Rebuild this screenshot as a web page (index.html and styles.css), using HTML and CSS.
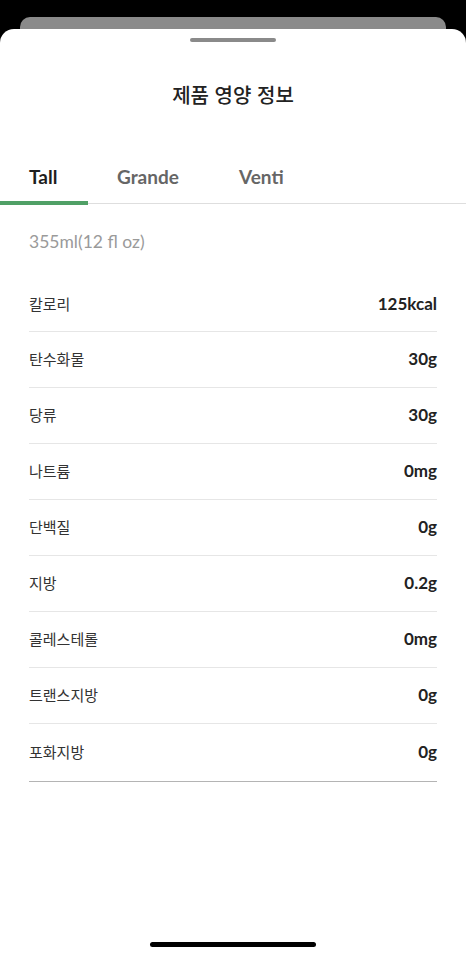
FILE: index.html
```html
<!DOCTYPE html>
<html lang="ko">
<head>
<meta charset="utf-8">
<link rel="stylesheet" href="styles.css">
</head>
<body>
<div class="screen">
  <div class="back-card"></div>
  <div class="sheet">
    <div class="handle"></div>
    <h1 class="title">제품 영양 정보</h1>
    <div class="tabs">
      <div class="tab active">Tall</div>
      <div class="tab">Grande</div>
      <div class="tab">Venti</div>
    </div>
    <div class="content">
      <div class="size">355ml(12 fl oz)</div>
      <ul class="rows">
        <li class="row"><span class="label">칼로리</span><span class="value">125kcal</span></li>
        <li class="row"><span class="label">탄수화물</span><span class="value">30g</span></li>
        <li class="row"><span class="label">당류</span><span class="value">30g</span></li>
        <li class="row"><span class="label">나트륨</span><span class="value">0mg</span></li>
        <li class="row"><span class="label">단백질</span><span class="value">0g</span></li>
        <li class="row"><span class="label">지방</span><span class="value">0.2g</span></li>
        <li class="row"><span class="label">콜레스테롤</span><span class="value">0mg</span></li>
        <li class="row"><span class="label">트랜스지방</span><span class="value">0g</span></li>
        <li class="row last"><span class="label">포화지방</span><span class="value">0g</span></li>
      </ul>
    </div>
    <div class="spacer"></div>
    <div class="home-indicator"></div>
  </div>
</div>
</body>
</html>
```
FILE: styles.css
```css
* { box-sizing: border-box; }
html, body { margin: 0; padding: 0; background: #000; }
body {
  font-family: "Noto Sans CJK KR", "Noto Sans", sans-serif;
  color: #222;
}
.screen {
  width: 466px;
  height: 957px;
  background: #000;
  padding-top: 17px;
  display: flex;
  flex-direction: column;
  overflow: hidden;
}
.back-card {
  margin: 0 20px;
  height: 24px;
  background: #8a8a8a;
  border-radius: 10px 10px 0 0;
  flex: none;
}
.sheet {
  margin-top: -12px;
  flex: 1;
  background: #fff;
  border-radius: 14px 14px 0 0;
  display: flex;
  flex-direction: column;
}
.handle {
  width: 86px;
  height: 4px;
  border-radius: 2px;
  background: #8a8a8a;
  margin: 9px auto 0;
}
.title {
  margin: 40px 0 0;
  text-align: center;
  font-size: 20px;
  font-weight: 500;
  line-height: 26px;
  color: #222;
}
.tabs {
  margin-top: 53px;
  display: flex;
  border-bottom: 1px solid #dedede;
  height: 43px;
}
.tab {
  font-family: "Lato", "Noto Sans CJK KR", sans-serif;
  font-weight: 700;
  font-size: 19px;
  color: #666;
  line-height: 24px;
  padding-top: 4px;
}
.tab:nth-child(1) { width: 88px; padding-left: 29px; }
.tab:nth-child(2) { width: 122px; padding-left: 29px; }
.tab:nth-child(3) { padding-left: 29px; }
.tab.active {
  color: #1e1e1e;
  border-bottom: 4px solid #50a066;
  margin-bottom: -2px;
}
.content {
  padding: 0 29px;
}
.size {
  margin-top: 26px;
  font-family: "Lato", "Noto Sans CJK KR", sans-serif;
  font-size: 17.5px;
  line-height: 24px;
  color: #9a9a9a;
}
.rows {
  list-style: none;
  margin: 27px 0 0;
  padding: 0;
}
.row {
  display: flex;
  justify-content: space-between;
  align-items: center;
  height: 56px;
  border-bottom: 1px solid #e6e6e6;
  padding-bottom: 2px;
}
.row:first-child { height: 51px; padding-bottom: 4px; }
.row.last { height: 58px; border-bottom: 1px solid #b4b4b4; }
.label {
  font-size: 15px;
  color: #333;
  line-height: 22px;
}
.value {
  font-family: "Lato", "Noto Sans CJK KR", sans-serif;
  font-weight: 700;
  font-size: 17px;
  color: #222;
  line-height: 22px;
}
.spacer { flex: 1; }
.home-indicator {
  width: 166px;
  height: 5px;
  border-radius: 3px;
  background: #000;
  margin: 0 auto 10px;
}
```
